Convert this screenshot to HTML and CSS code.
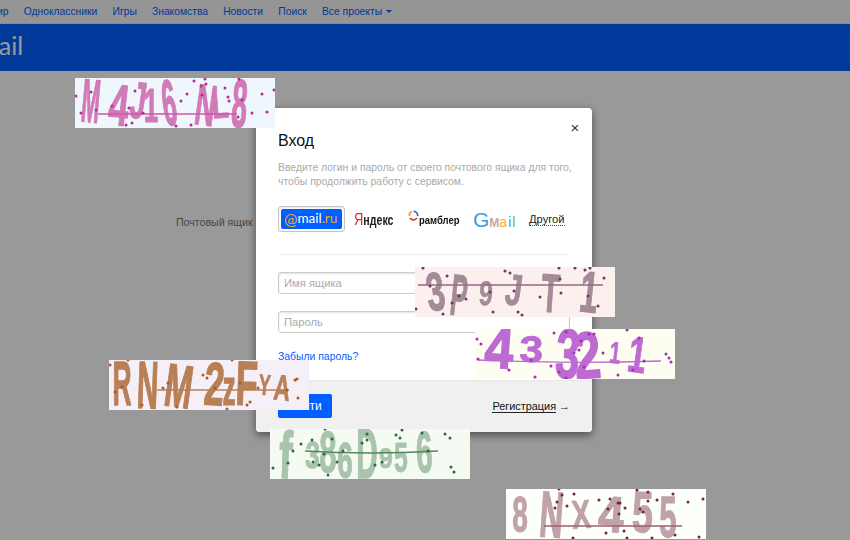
FILE: index.html
```html
<!DOCTYPE html>
<html lang="ru">
<head>
<meta charset="utf-8">
<title>Вход</title>
<link rel="stylesheet" href="styles.css">
</head>
<body>
<div class="site">
  <nav class="topnav">
    <a>Мир</a><a>Одноклассники</a><a>Игры</a><a>Знакомства</a><a>Новости</a><a>Поиск</a><a>Все проекты <i class="caret"></i></a>
  </nav>
  <header class="brand"><span class="brand-name">Mail</span></header>
  <main class="page-body"><label class="page-label">Почтовый ящик</label></main>
</div>

<div class="overlay">
  <section class="modal">
    <div class="modal-body">
      <button class="close" type="button">×</button>
      <h1 class="modal-title">Вход</h1>
      <p class="modal-text">Введите логин и пароль от своего почтового ящика для того, чтобы продолжить работу с сервисом.</p>
      <div class="providers">
        <span class="prov-mail"><span class="mail-inner"><b class="mail-at">@</b><span class="mail-word">mail</span><span class="mail-ru">.ru</span></span></span>
        <span class="prov-yandex"><b class="ya-red">Я</b>ндекс</span>
        <span class="prov-rambler">
          <svg class="rambler-icon" width="11" height="11" viewBox="0 0 11 11"><path d="M5.5 1.2A4.2 4.2 0 0 1 9.6 6.2" fill="none" stroke="#3558c8" stroke-width="1.6"/><path d="M9 7.9A4.2 4.2 0 0 1 2 8" fill="none" stroke="#ee3322" stroke-width="1.6"/><path d="M1.3 6A4.2 4.2 0 0 1 3.8 1.6" fill="none" stroke="#f5a020" stroke-width="1.6"/></svg><span class="rambler-word">рамблер</span>
        </span>
        <span class="prov-gmail"><span class="g1">G</span><span class="g2">M</span><span class="g3">a</span><span class="g4">i</span><span class="g5">l</span></span>
        <span class="prov-other">Другой</span>
      </div>
      <hr class="divider">
      <input class="field" type="text" placeholder="Имя ящика">
      <input class="field" type="password" placeholder="Пароль">
      <a class="forgot">Забыли пароль?</a>
    </div>
    <footer class="modal-footer">
      <button class="submit" type="button">Войти</button>
      <a class="register"><span class="register-word">Регистрация</span> →</a>
    </footer>
  </section>
</div>

<svg class="captcha c1" width="200" height="50" viewBox="0 0 200 50">
  <g class="glyphs">
    <text transform="translate(14 44) rotate(5) scale(.55 1.53)">M</text>
    <text transform="translate(42 47) rotate(6) scale(.9 1.45)">4</text>
    <text transform="translate(61 40) rotate(8) scale(.7 1.3)">J</text>
    <text transform="translate(76 44) scale(.65 1.2)">1</text>
    <text transform="translate(97 47) rotate(-8) scale(.62 1.63)">6</text>
    <text transform="translate(128 47) rotate(8) scale(.7 1.45)">N</text>
    <text transform="translate(146 40) rotate(-4) scale(.7 1.05)">L</text>
    <text transform="translate(163 49) rotate(4) scale(.7 1.7)">8</text>
  </g>
  <path class="strike" d="M23 36H162"/>
  <path class="dots" d="M1 18h.01M16 14h.01M6 35h.01M21 32h.01M37 28h.01M60 13h.01M54 30h.01M68 35h.01M51 47h.01M57 45h.01M119 3h.01M130 1h.01M126 8h.01M131 6h.01M112 16h.01M106 23h.01M127 17h.01M150 10h.01M153 19h.01M154 23h.01M167 22h.01M164 1h.01M163 39h.01M177 35h.01M187 16h.01M192 34h.01M199 12h.01M101 48h.01M116 47h.01"/>
</svg>
<svg class="captcha c2" width="200" height="50" viewBox="0 0 200 50">
  <g class="glyphs">
    <text transform="translate(23 43) rotate(-8) scale(.82 1.35)">3</text>
    <text transform="translate(42 48) rotate(6) scale(.62 1.45)">P</text>
    <text transform="translate(70 38) rotate(4) scale(.62 .85)">9</text>
    <text transform="translate(97 38) rotate(8) scale(.74 1.1)">J</text>
    <text transform="translate(134 45) rotate(4) scale(.74 1.35)">T</text>
    <text transform="translate(172 45) rotate(6) scale(.82 1.45)">1</text>
  </g>
  <path class="strike" d="M3 18L188 18"/>
  <path class="dots" d="M8 1h.01M32 9h.01M15 19h.01M90 4h.01M95 6h.01M144 1h.01M160 1h.01M170 3h.01M175 1h.01M145 12h.01M189 11h.01M173 29h.01M183 39h.01M125 30h.01M146 26h.01M99 24h.01M75 25h.01M51 32h.01M44 29h.01M37 36h.01M28 47h.01M78 45h.01M103 45h.01M107 48h.01M1 42h.01"/>
</svg>
<svg class="captcha c3" width="200" height="50" viewBox="0 0 200 50">
  <g class="glyphs">
    <text transform="translate(23 39) rotate(4) scale(1.3 1.42)">4</text>
    <text transform="translate(56 33) rotate(2) scale(1.07 .92)">3</text>
    <text transform="translate(91 49) rotate(4) scale(1.07 1.75)">3</text>
    <text transform="translate(114 49) rotate(-4) scale(1.19 1.65)">2</text>
    <text transform="translate(139 34) rotate(6) scale(.5 .76)">1</text>
    <text transform="translate(160 43) rotate(8) scale(.82 1.27)">1</text>
  </g>
  <path class="strike" d="M3 31Q90 35 186 32"/>
  <path class="dots" d="M2 10h.01M6 15h.01M91 3h.01M79 4h.01M114 5h.01M119 5h.01M152 1h.01M164 9h.01M106 12h.01M104 21h.01M99 24h.01M128 24h.01M169 32h.01M191 25h.01M194 29h.01M196 33h.01M158 41h.01M143 46h.01M109 38h.01M56 31h.01M76 37h.01M84 43h.01M34 41h.01M60 48h.01M91 49h.01M3 30h.01"/>
</svg>
<svg class="captcha c4" width="200" height="50" viewBox="0 0 200 50">
  <g class="glyphs">
    <text transform="translate(13 45) scale(.66 1.56)">R</text>
    <text transform="translate(38 48) rotate(2) scale(.74 1.67)">N</text>
    <text transform="translate(67 47) rotate(8) scale(.82 1.52)">M</text>
    <text transform="translate(104 45) rotate(4) scale(.9 1.52)">2</text>
    <text transform="translate(120 45) scale(.66 1.3)">z</text>
    <text transform="translate(137 45) rotate(2) scale(.9 1.56)">F</text>
    <text transform="translate(155 35) rotate(4) scale(.45 .73)">Y</text>
    <text transform="translate(172 40) rotate(6) scale(.57 .9)">A</text>
  </g>
  <path class="strike" d="M48 30H180"/>
  <path class="dots" d="M1 5h.01M19 0h.01M6 32h.01M13 27h.01M54 28h.01M59 23h.01M94 15h.01M98 18h.01M106 28h.01M131 23h.01M138 45h.01M141 42h.01M186 20h.01M188 19h.01M178 30h.01M189 38h.01M33 45h.01M68 47h.01M118 49h.01M149 28h.01M123 0h.01"/>
</svg>
<svg class="captcha c5" width="200" height="50" viewBox="0 0 200 50">
  <g class="glyphs">
    <text transform="translate(15 49) rotate(2) scale(1 1.65)">f</text>
    <text transform="translate(42 39) rotate(2) scale(.66 .95)">3</text>
    <text transform="translate(58 43) scale(.78 1.42)">8</text>
    <text transform="translate(75 49) scale(.7 1.27)">6</text>
    <text transform="translate(97 49) scale(.74 1.75)">D</text>
    <text transform="translate(116 39) scale(.62 .73)">9</text>
    <text transform="translate(131 43) scale(.62 1.05)">5</text>
    <text transform="translate(155 43) rotate(-2) scale(.74 1.45)">6</text>
  </g>
  <path class="strike" d="M35 22Q100 26 168 22"/>
  <path class="dots" d="M3 39h.01M18 34h.01M23 22h.01M31 15h.01M42 11h.01M62 10h.01M43 33h.01M49 36h.01M54 25h.01M73 22h.01M67 33h.01M58 46h.01M92 14h.01M97 11h.01M97 5h.01M105 36h.01M112 33h.01M126 6h.01M130 9h.01M152 4h.01M158 22h.01M175 5h.01M180 9h.01M181 38h.01M184 43h.01M55 0h.01M132 1h.01"/>
</svg>
<svg class="captcha c6" width="200" height="50" viewBox="0 0 200 50">
  <g class="glyphs">
    <text transform="translate(14 43) scale(.7 1.27)">8</text>
    <text transform="translate(44 48) rotate(4) scale(.82 1.63)">N</text>
    <text transform="translate(76 39) rotate(-4) scale(.7 1)">X</text>
    <text transform="translate(104 43) rotate(4) scale(1.15 1.27)">4</text>
    <text transform="translate(136 43) rotate(2) scale(.94 1.45)">5</text>
    <text transform="translate(162 48) scale(.78 1.45)">5</text>
  </g>
  <path class="strike" d="M38 37H176"/>
  <path class="dots" d="M53 0h.01M56 6h.01M68 5h.01M51 13h.01M61 17h.01M49 19h.01M93 11h.01M102 20h.01M104 10h.01M112 14h.01M114 14h.01M119 19h.01M113 25h.01M131 1h.01M142 3h.01M142 12h.01M151 11h.01M167 5h.01M134 20h.01M137 23h.01M182 13h.01M197 10h.01M100 44h.01M118 42h.01M169 46h.01M67 49h.01M121 49h.01M146 49h.01M193 48h.01"/>
</svg>
</body>
</html>
```
FILE: styles.css
```css
* { box-sizing: border-box; }
html, body { margin: 0; height: 100%; overflow: hidden; }
body { font-family: "Liberation Sans", Arial, sans-serif; background: #fff; color: #333; position: relative; }

.site { width: 850px; height: 540px; overflow: hidden; }
.topnav { display: flex; gap: 15.2px; height: 24px; align-items: center; margin-left: -11.5px; background: #f8f8f8; border-bottom: 1px solid #e7e7e7; font-size: 10.3px; white-space: nowrap; }
.topnav a { color: #0060ff; }
.caret { display: inline-block; width: 0; height: 0; margin-left: 1px; vertical-align: 2px; border-top: 3px solid #0060ff; border-left: 3px solid transparent; border-right: 3px solid transparent; }
.brand { height: 47px; background: #0060ff; display: flex; align-items: center; padding-bottom: 5px; }
.brand-name { margin-left: -24px; color: #fff; font: 400 25px/1 Lato, sans-serif; }
.page-body { padding: 141px 0 0 176px; }
.page-label { font-size: 10.6px; color: #777; }

.overlay { position: absolute; inset: 0; background: rgba(0,0,0,.4); padding: 108px 0 0 256px; }
.modal { width: 336px; height: 324px; background: #fff; border-radius: 4px; box-shadow: 0 3px 9px rgba(0,0,0,.5); overflow: hidden; display: flex; flex-direction: column; }
.modal-body { position: relative; flex: 1; padding: 23px 22px 0; display: flex; flex-direction: column; }
.close { position: absolute; top: 13px; right: 11px; width: 12px; height: 14px; padding: 0; border: 0; background: none; color: #333; font: 15px/14px "Liberation Sans", sans-serif; }
.modal-title { margin: 0; font-weight: 400; font-size: 16px; line-height: 20px; color: #111; }
.modal-text { margin: 10px -6px 0 0; font-size: 10.4px; line-height: 14px; color: #aaa; }
.providers { display: flex; align-items: center; margin-top: 17px; height: 26px; }
.prov-mail { width: 67px; height: 26px; padding: 2px; border: 1px solid #c4c4c4; border-radius: 3px; display: flex; box-shadow: inset 0 1px 2px rgba(0,0,0,.1); }
.mail-inner { flex: 1; background: #0060ff; border-radius: 2px; display: flex; align-items: center; padding-left: 3px; font: 13.5px/1 Lato, sans-serif; }
.mail-at { font-weight: 400; color: #f5a623; font-size: 16px; margin-top: -1px; }
.mail-word { color: #fff; }
.mail-ru { color: #f5a623; }
.prov-yandex { margin-left: 9px; width: 40px; flex: none; font: 700 14px/1 "Liberation Sans", sans-serif; color: #222; white-space: nowrap; transform: scaleX(.76); transform-origin: left; }
.ya-red { color: #e8232a; font-size: 17px; font-weight: 400; }
.prov-rambler { margin-left: 14px; width: 53px; flex: none; display: flex; font: 700 11px/1 "Liberation Sans", sans-serif; color: #111; white-space: nowrap; }
.rambler-icon { margin-top: -3px; flex: none; }
.rambler-word { margin-top: 2px; transform: scaleX(.86); transform-origin: left; }
.prov-gmail { margin-left: 12px; width: 44px; flex: none; font: 400 14px/1 "Liberation Sans", sans-serif; white-space: nowrap; }
.g1 { color: #3aa0dc; font-size: 21px; }
.g2 { color: #c9a89e; font-weight: 700; font-size: 12px; }
.g3 { color: #f2b23a; }
.g4 { color: #3aa0dc; margin-left: 1px; }
.g5 { color: #5cb870; margin-left: 1px; }
.prov-other { margin-left: 12px; font-size: 11.2px; color: #222; border-bottom: 1px dotted #444; line-height: 12px; }
.divider { width: 100%; margin: 22px 0 0; border: 0; border-top: 1px solid #eee; }
.field { flex: none; width: 100%; height: 22px; margin-top: 17px; padding: 0 5px; border: 1px solid #ccc; border-radius: 3px; box-shadow: inset 0 1px 2px rgba(0,0,0,.12); font: 11.2px "Liberation Sans", sans-serif; outline: 0; }
.field::placeholder { color: #aaa; }
.forgot { margin-top: 17px; font-size: 10.4px; color: #0060ff; line-height: 13px; }
.modal-footer { height: 52px; flex: none; background: #f0f0f0; border-top: 1px solid #e8e8e8; padding: 0 22px 2px; display: flex; align-items: center; justify-content: space-between; }
.submit { width: 54px; height: 24px; border: 0; border-radius: 2px; background: #0060ff; color: #fff; font: 12px "Liberation Sans", sans-serif; }
.register { font-size: 10.9px; color: #111; }
.register-word { border-bottom: 1px solid #222; }

.captcha { position: absolute; display: block; overflow: hidden; }
.glyphs { font-family: "Liberation Sans", sans-serif; font-weight: 700; font-size: 40px; text-anchor: middle; fill: currentColor; stroke: currentColor; stroke-width: .9; stroke-linejoin: round; filter: blur(.55px); }
.strike { fill: none; stroke-width: 1.3; }
.dots { fill: none; stroke-width: 3; stroke-linecap: round; }
.c1 { left: 75px; top: 78px; background: #f0f7fc; }
.c1 .glyphs { color: #d07ab8; } .c1 .strike { stroke: #d056a8; } .c1 .dots { stroke: #b82a94; }
.c2 { left: 415px; top: 267px; background: #fbf0ee; }
.c2 .glyphs { color: #a58a98; } .c2 .strike { stroke: #906a80; } .c2 .dots { stroke: #6e3a5e; }
.c3 { left: 475px; top: 329px; background: #fdfdf1; }
.c3 .glyphs { color: #bd6bd2; } .c3 .strike { stroke: #bd6bd2; } .c3 .dots { stroke: #a030b4; }
.c4 { left: 109px; top: 360px; background: #f5f0f7; }
.c4 .glyphs { color: #b97f55; } .c4 .strike { stroke: #b97f55; } .c4 .dots { stroke: #a85a30; }
.c5 { left: 270px; top: 429px; background: #f5faf2; }
.c5 .glyphs { color: #a9c4ac; } .c5 .strike { stroke: #4f8a58; } .c5 .dots { stroke: #2a6a3c; }
.c6 { left: 506px; top: 489px; background: #fdfffa; }
.c6 .glyphs { color: #c0a2aa; } .c6 .strike { stroke: #9a6070; } .c6 .dots { stroke: #74243c; }
```
